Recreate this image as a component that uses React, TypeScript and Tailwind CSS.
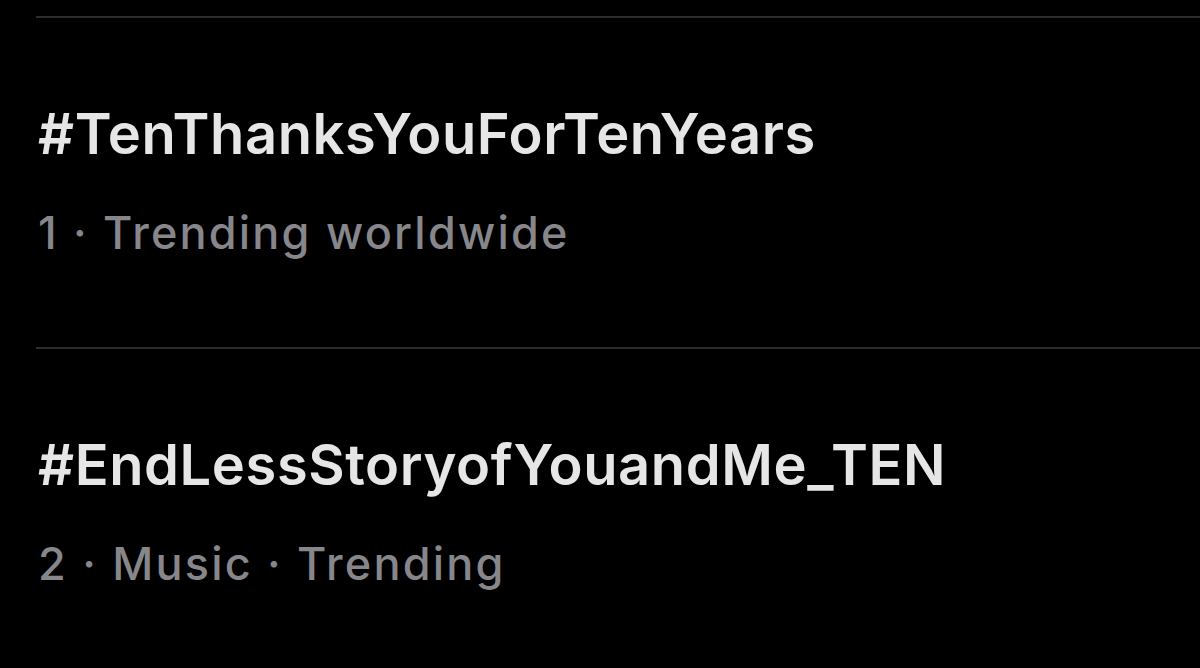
import React from "react";

const items = [
  { tag: "#TenThanksYouForTenYears", meta: "1 · Trending worldwide" },
  { tag: "#EndLessStoryofYouandMe_TEN", meta: "2 · Music · Trending" },
];

export default function App() {
  return (
    <div
      className="w-[1200px] h-[668px] bg-black overflow-hidden pt-[16px] pl-[36px]"
      style={{ fontFamily: "Inter, 'Noto Sans', sans-serif" }}
    >
      {items.map((it) => (
        <div key={it.tag} className="border-t-2 border-[#2c2c2e] h-[331px]">
          <div className="pt-[88px] pl-[2px] text-[56px] leading-[56px] font-semibold text-[#e6e6e6] tracking-[0.6px]">
            {it.tag}
          </div>
          <div className="mt-[48px] pl-[2px] text-[45px] leading-[45px] font-medium text-[#86868b] tracking-[2.2px]">
            {it.meta}
          </div>
        </div>
      ))}
    </div>
  );
}
